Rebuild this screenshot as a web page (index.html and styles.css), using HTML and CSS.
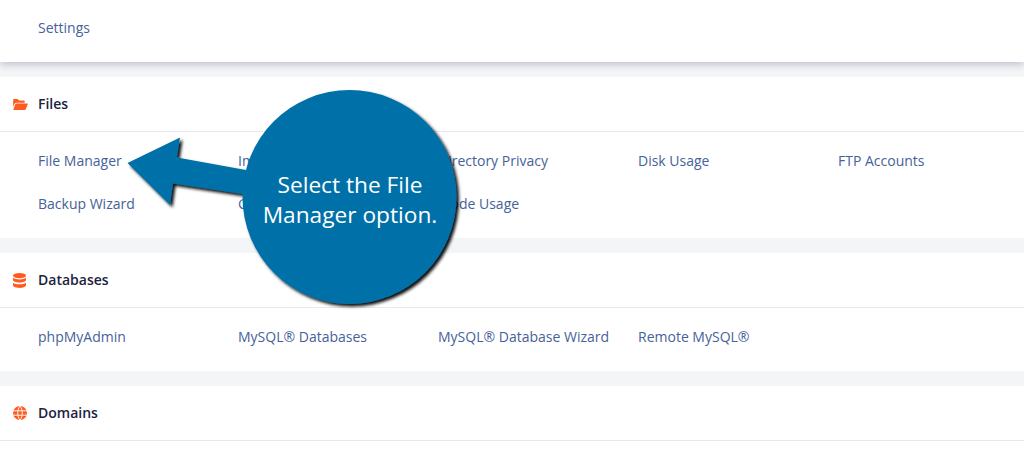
FILE: index.html
```html
<!DOCTYPE html>
<html lang="en">
<head>
<meta charset="utf-8">
<title>cPanel</title>
<link rel="stylesheet" href="styles.css">
</head>
<body>
<main class="page">
  <section class="card card-top">
    <div class="links links-top"><a>Settings</a></div>
  </section>
  <section class="card">
    <header class="head">
      <span class="slot"><svg class="icon icon-folder" viewBox="0 0 16 12"><path d="M0 1.200C0 .5.5 0 1.200 0h3.600l1.600 1.600h5c.7 0 1.200.5 1.200 1.200V4H3.600c-.9 0-1.600.4-2 1.200L0 8.400z"/><path d="M3.400 5h12c.4 0 .7.4.5.8l-2.200 5.400c-.2.5-.6.8-1.100.8H.8c-.4 0-.7-.4-.5-.8l2-5.400c.2-.5.6-.8 1.100-.8z"/></svg></span>
      <h2>Files</h2>
    </header>
    <div class="links">
      <a>File Manager</a><a>Images</a><a>Directory Privacy</a><a>Disk Usage</a><a>FTP Accounts</a>
      <a>Backup Wizard</a><a>Git</a><a>Inode Usage</a>
    </div>
  </section>
  <section class="card">
    <header class="head">
      <span class="slot"><svg class="icon icon-db" viewBox="0 0 14 16"><ellipse cx="7" cy="2.800" rx="7" ry="2.800"/><path d="M0 5c1.500 1.300 4.200 1.800 7 1.800S12.500 6.300 14 5v2.500c0 1.500-3.100 2.700-7 2.700S0 9 0 7.500z"/><path d="M0 10.300c1.500 1.300 4.200 1.800 7 1.800s5.500-.5 7-1.800v2.900C14 14.700 10.900 16 7 16s-7-1.300-7-2.800z"/></svg></span>
      <h2>Databases</h2>
    </header>
    <div class="links">
      <a>phpMyAdmin</a><a>MySQL® Databases</a><a>MySQL® Database Wizard</a><a>Remote MySQL®</a>
    </div>
  </section>
  <section class="card card-last">
    <header class="head">
      <span class="slot"><svg class="icon icon-globe" viewBox="0 0 14 14"><circle cx="7" cy="7" r="7"/><path class="globe-lines" d="M0 4.800h14M0 9.200h14M7 0C4 3.500 4 10.500 7 14M7 0c3 3.500 3 10.500 0 14"/></svg></span>
      <h2>Domains</h2>
    </header>
  </section>
</main>
<div class="callout">
  <svg class="arrow" viewBox="0 0 1024 456">
    <defs>
      <filter id="drop" x="-20%" y="-20%" width="140%" height="140%">
        <feDropShadow dx="2.500" dy="2.500" stdDeviation="1.800" flood-color="#000" flood-opacity=".95"/>
      </filter>
    </defs>
    <g filter="url(#drop)" fill="#0071a8">
      <path d="M127.500 163 180 137.500 177 157.500 262 173 262 197 173 183.500 170 205z"/>
      <circle cx="349.500" cy="197" r="107"/>
    </g>
  </svg>
  <p class="callout-text">Select the File Manager option.</p>
</div>
</body>
</html>
```
FILE: styles.css
```css
* { box-sizing: border-box; }
html, body { margin: 0; padding: 0; }
body {
  width: 1024px;
  height: 456px;
  overflow: hidden;
  position: relative;
  background: #f4f5f7;
  font-family: "Open Sans", "Liberation Sans", sans-serif;
}
.page {
  display: flex;
  flex-direction: column;
  gap: 15px;
}
.card {
  background: #fff;
}
.card-top {
  height: 62px;
  box-shadow: 0 2px 8px rgba(60, 65, 100, .32);
}
.card-last {
  height: 70px;
}
.head {
  height: 55px;
  display: flex;
  align-items: center;
  padding-left: 13px;
  border-bottom: 1px solid #e6e7f1;
}
.slot {
  flex: 0 0 25px;
  display: flex;
  align-items: center;
}
.icon {
  display: block;
  fill: #ff5a1f;
}
.icon-folder {
  width: 15px;
  height: 11px;
}
.icon-db {
  width: 13px;
  height: 15px;
}
.icon-globe {
  width: 14px;
  height: 14px;
}
.globe-lines {
  fill: none;
  stroke: #fff;
  stroke-width: .9;
}
.head h2 {
  margin: 0;
  font-size: 14px;
  line-height: 20px;
  font-weight: 600;
  color: #1c2340;
}
.links {
  display: grid;
  grid-template-columns: repeat(5, 200px);
  grid-auto-rows: 43px;
  padding: 7px 0 13px 38px;
}
.links-top {
  padding: 6px 0 0 38px;
}
.links a {
  font-size: 14px;
  line-height: 43px;
  color: #466299;
  white-space: nowrap;
}
.callout {
  position: absolute;
  inset: 0;
}
.arrow {
  position: absolute;
  left: 0;
  top: 0;
  width: 1024px;
  height: 456px;
}
.callout-text {
  position: absolute;
  left: 250px;
  top: 170px;
  width: 200px;
  margin: 0;
  text-align: center;
  font-size: 22.7px;
  line-height: 30px;
  color: #fff;
}
```
